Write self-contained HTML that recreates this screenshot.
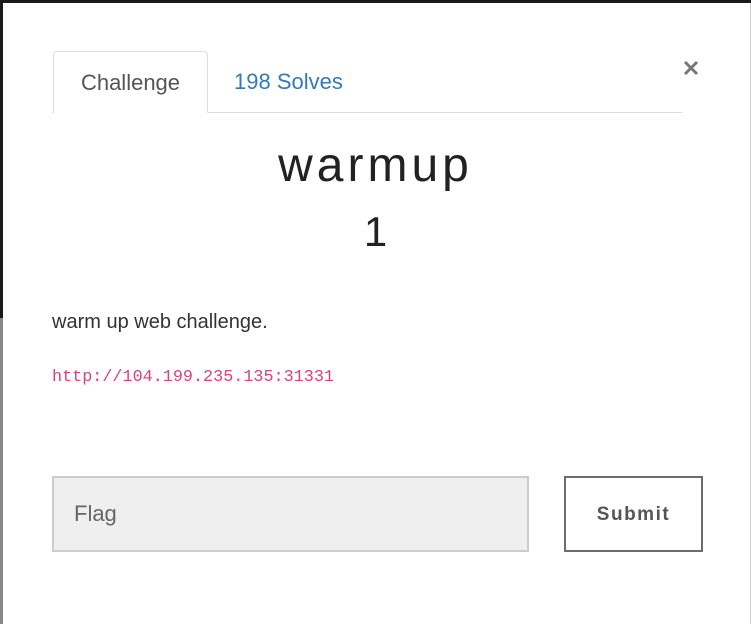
<!DOCTYPE html>
<html><head><style>
body{margin:0;width:751px;height:624px;position:relative;background:#fff;font-family:"Liberation Sans",sans-serif;overflow:hidden}
.top{position:absolute;left:0;top:0;width:751px;height:3px;background:#1a1a1a}
.l1{position:absolute;left:0;top:0;width:3px;height:318px;background:#1a1a1a}
.l2{position:absolute;left:0;top:318px;width:3px;height:306px;background:#888}
.r{position:absolute;right:0;top:3px;width:1px;height:621px;background:#ccc}
.line{position:absolute;left:52px;top:112px;width:630px;height:1px;background:#ddd}
.tab{position:absolute;left:53px;top:51px;width:155px;height:62px;border:1px solid #ddd;border-bottom:1px solid #fff;border-radius:4px 4px 0 0;background:#fff;box-sizing:border-box;color:#555;font-size:22px;text-align:center;line-height:62px}
.tab2{position:absolute;left:234px;top:51px;line-height:62px;font-size:22px;color:#337ab7}
.x{position:absolute;left:680px;top:56px;width:22px;height:22px}
.t1{position:absolute;left:0;width:751px;top:138px;text-align:center;font-size:48px;color:#222;letter-spacing:4px;font-weight:300}
.t2{position:absolute;left:0;width:751px;top:208px;text-align:center;font-size:42px;color:#222}
.d{position:absolute;left:52px;top:311px;font-size:20px;color:#333}
.u{position:absolute;left:52px;top:368px;font-family:"Liberation Mono",monospace;font-size:16.8px;color:#d6437f}
.in{position:absolute;left:52px;top:476px;width:477px;height:76px;box-sizing:border-box;border:2px solid #ccc;background:#efefef;color:#666;font-size:22px;padding-left:20px;line-height:72px}
.b{position:absolute;left:564px;top:476px;width:139px;height:76px;box-sizing:border-box;border:2px solid #6c6c6c;color:#555;font-size:19px;font-weight:bold;text-align:center;line-height:74px;letter-spacing:1.5px}
</style></head><body>
<div class="top"></div><div class="l1"></div><div class="l2"></div><div class="r"></div>
<div class="line"></div>
<div class="tab">Challenge</div>
<div class="tab2">198 Solves</div>
<svg class="x" viewBox="0 0 22 22"><path d="M5 6L17 18M17 6L5 18" stroke="#777" stroke-width="3"/></svg>
<div class="t1">warmup</div>
<div class="t2">1</div>
<div class="d">warm up web challenge.</div>
<div class="u">http://104.199.235.135:31331</div>
<div class="in">Flag</div>
<div class="b">Submit</div>
</body></html>
